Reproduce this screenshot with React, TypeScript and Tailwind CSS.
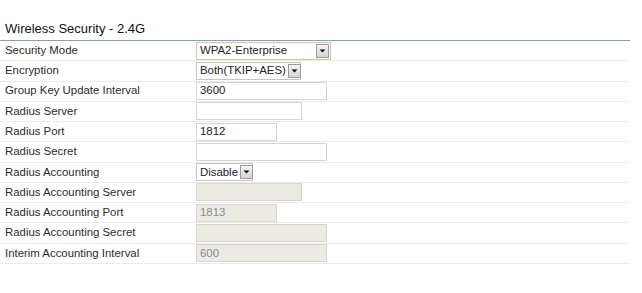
import React from 'react';

type Field =
  | { kind: 'select'; value: string; width: string; focused?: boolean }
  | { kind: 'input'; value: string; width: string; disabled?: boolean };

interface Row {
  label: string;
  field: Field;
}

const rows: Row[] = [
  { label: 'Security Mode', field: { kind: 'select', value: 'WPA2-Enterprise', width: 'w-[135px]', focused: true } },
  { label: 'Encryption', field: { kind: 'select', value: 'Both(TKIP+AES)', width: 'w-[105px]' } },
  { label: 'Group Key Update Interval', field: { kind: 'input', value: '3600', width: 'w-[131px]' } },
  { label: 'Radius Server', field: { kind: 'input', value: '', width: 'w-[106px]' } },
  { label: 'Radius Port', field: { kind: 'input', value: '1812', width: 'w-[81px]' } },
  { label: 'Radius Secret', field: { kind: 'input', value: '', width: 'w-[131px]' } },
  { label: 'Radius Accounting', field: { kind: 'select', value: 'Disable', width: 'w-[57px]' } },
  { label: 'Radius Accounting Server', field: { kind: 'input', value: '', width: 'w-[106px]', disabled: true } },
  { label: 'Radius Accounting Port', field: { kind: 'input', value: '1813', width: 'w-[81px]', disabled: true } },
  { label: 'Radius Accounting Secret', field: { kind: 'input', value: '', width: 'w-[131px]', disabled: true } },
  { label: 'Interim Accounting Interval', field: { kind: 'input', value: '600', width: 'w-[131px]', disabled: true } },
];

const ArrowButton: React.FC = () => (
  <span className="flex h-[14px] w-[13px] shrink-0 items-center justify-center border border-[#9a9a9a] bg-gradient-to-b from-[#f4f4f4] to-[#d4d4d4]">
    <svg width="7" height="4" viewBox="0 0 7 4">
      <path d="M0.5 0.5 L6.5 0.5 L3.5 3.5 Z" fill="#111" />
    </svg>
  </span>
);

const FieldView: React.FC<{ field: Field }> = ({ field }) => {
  if (field.kind === 'select') {
    return (
      <div
        className={`flex h-[18px] items-center justify-between gap-[2px] pl-[3px] pr-[1px] text-[#222] ${field.width} ${
          field.focused ? 'border border-[#d8c68f] bg-white' : 'border border-[#c4c4c4] bg-white'
        }`}
      >
        <span className="whitespace-nowrap leading-none">{field.value}</span>
        <ArrowButton />
      </div>
    );
  }
  return (
    <div
      className={`flex h-[18px] items-center pl-[3px] ${field.width} ${
        field.disabled
          ? 'border border-[#d6d6d0] bg-[#ebebe4] text-[#8a8a8a]'
          : 'border border-[#d4d4d4] bg-white text-[#222]'
      }`}
    >
      <span className="leading-none">{field.value}</span>
    </div>
  );
};

export default function App() {
  return (
    <div
      className="h-[293px] w-[642px] bg-white text-[11.4px] text-[#2b2b2b]"
      style={{ fontFamily: '"Liberation Sans", Arial, sans-serif' }}
    >
      <div className="w-[630px]">
        <div className="flex h-[41px] items-end border-b border-[#8c9fb0] pb-[5px] pl-[5px]">
          <h1 className="text-[13px] leading-none text-[#111]">Wireless Security - 2.4G</h1>
        </div>
        {rows.map((row) => (
          <div
            key={row.label}
            className="flex h-[20.27px] items-center border-b border-[#ebebeb]"
          >
            <div className="w-[196px] shrink-0 pl-[5px] leading-none">{row.label}</div>
            <FieldView field={row.field} />
          </div>
        ))}
      </div>
    </div>
  );
}
